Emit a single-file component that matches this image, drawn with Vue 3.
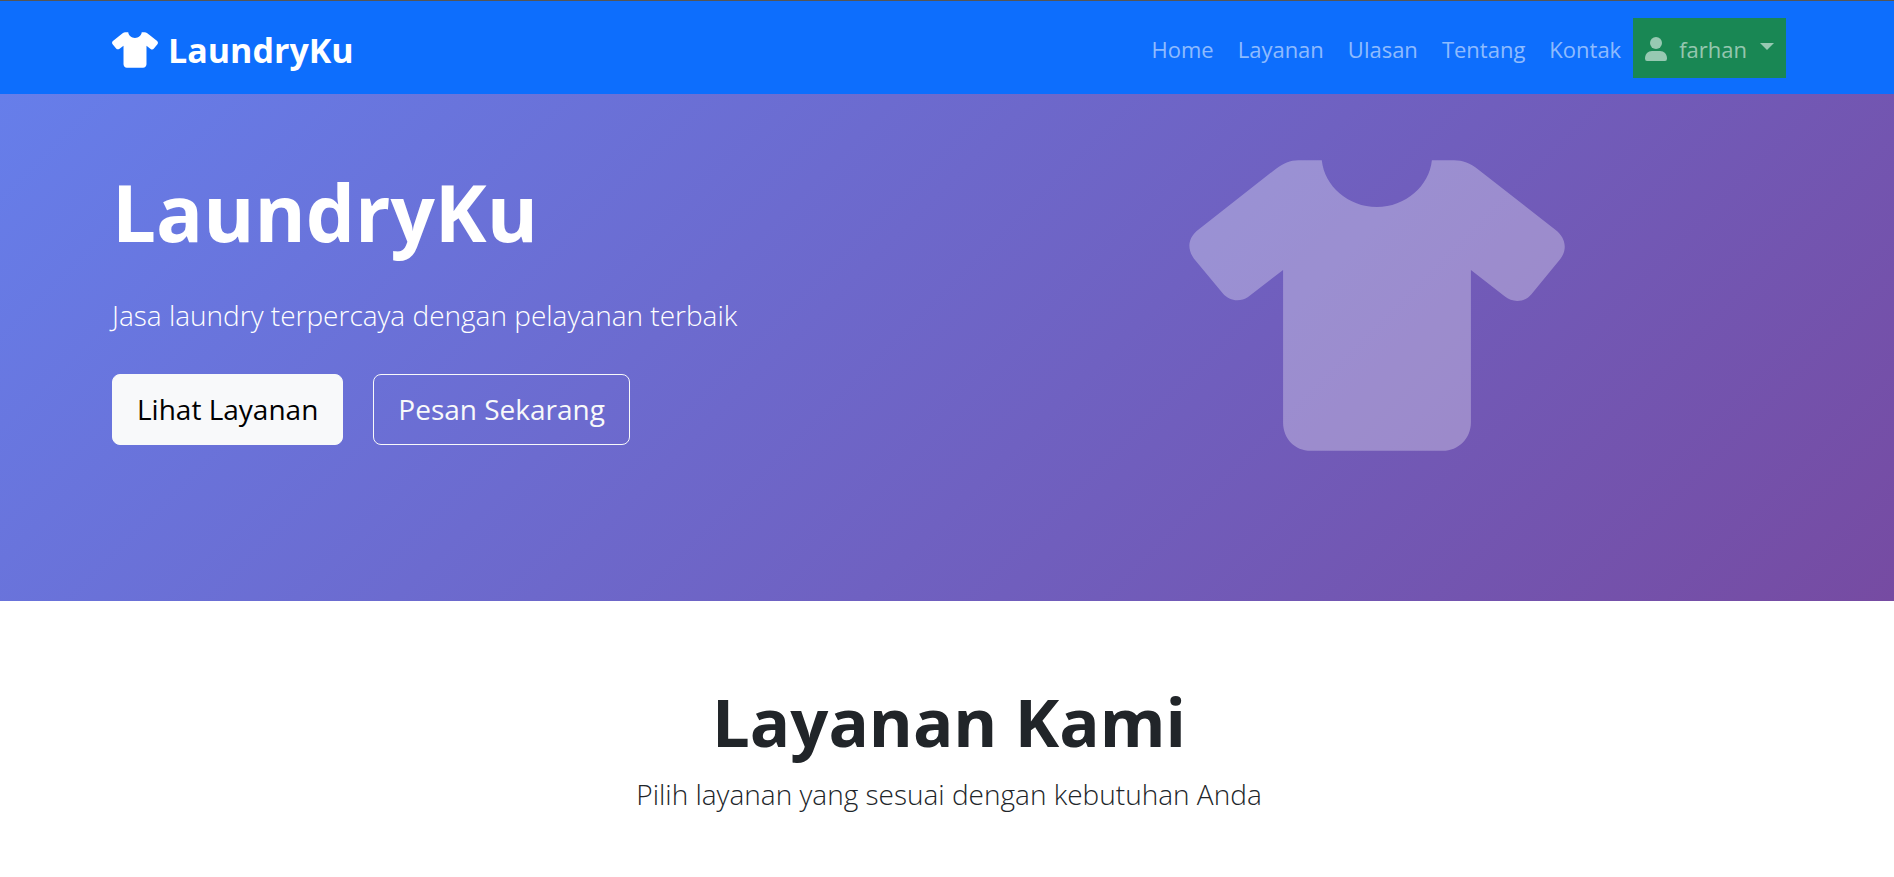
<script setup>
import { ref } from 'vue'

const brand = 'LaundryKu'
const links = ref(['Home', 'Layanan', 'Ulasan', 'Tentang', 'Kontak'])
const shirt =
  'M413 60H483C491 138 562 200 648 200S805 138 813 60H880C904 60 930 69 950 86L1184 269C1214 292 1220 327 1198 356L1112 461C1092 486 1056 489 1031 468L930 389V846C930 894 892 931 846 931H450C402 931 367 894 367 846V389L262 470C238 486 206 483 186 459L100 355C79 327 82 295 108 272L345 86C368 69 388 60 413 60Z'
</script>

<template>
  <div class="page">
    <header class="navbar">
      <a class="brand" href="#">
        <svg class="brand-icon" viewBox="85 60 1127 871" aria-hidden="true"><path :d="shirt" /></svg>
        <span>{{ brand }}</span>
      </a>
      <nav class="nav">
        <a v-for="link in links" :key="link" class="nav-link" href="#">{{ link }}</a>
        <button class="user" type="button">
          <svg class="user-icon" viewBox="0 0 22 24" aria-hidden="true">
            <circle cx="11" cy="6" r="6" />
            <path d="M7 14H15C19 14 22 17 22 21.500Q22 24 20 24H2Q0 24 0 21.500C0 17 3 14 7 14Z" />
          </svg>
          <span>farhan</span>
          <span class="caret"></span>
        </button>
      </nav>
    </header>

    <section class="hero">
      <div class="hero-text">
        <h1>{{ brand }}</h1>
        <p class="lead">Jasa laundry terpercaya dengan pelayanan terbaik</p>
        <div class="actions">
          <a class="btn btn-light" href="#layanan">Lihat Layanan</a>
          <a class="btn btn-outline" href="#pesan">Pesan Sekarang</a>
        </div>
      </div>
      <div class="hero-art">
        <svg class="hero-icon" viewBox="85 60 1127 871" aria-hidden="true"><path :d="shirt" /></svg>
      </div>
    </section>

    <main id="layanan" class="services">
      <h2>Layanan Kami</h2>
      <p class="lead">Pilih layanan yang sesuai dengan kebutuhan Anda</p>
    </main>
  </div>
</template>

<style>
body {
  margin: 0;
  background: #fff;
}
</style>

<style scoped>
.page {
  font-family: 'Open Sans', 'Noto Sans', sans-serif;
  color: #212529;
}
.page * {
  box-sizing: border-box;
}
.navbar {
  display: flex;
  align-items: center;
  justify-content: space-between;
  border-top: 1px solid #555;
  padding: 17px 108px 16px 112px;
  background: #0d6efd;
}
.brand {
  display: flex;
  align-items: center;
  gap: 10px;
  padding-top: 4px;
  color: #fff;
  font-size: 34px;
  font-weight: 700;
  line-height: 54px;
  text-decoration: none;
}
.brand-icon {
  width: 46px;
  height: 36px;
  fill: #fff;
}
.nav {
  display: flex;
  align-items: center;
  font-size: 22px;
  line-height: 36px;
}
.nav-link {
  padding: 13px 12px 11px;
  color: rgba(255, 255, 255, 0.55);
  text-decoration: none;
}
.user {
  display: flex;
  align-items: center;
  border: 0;
  padding: 13px 12px 11px;
  background: #198754;
  color: rgba(255, 255, 255, 0.55);
  font: inherit;
}
.user-icon {
  width: 22px;
  height: 24px;
  margin-right: 12px;
  fill: currentColor;
}
.caret {
  margin: 0 0 6px 13px;
  border: 7px solid transparent;
  border-top-color: currentColor;
  border-bottom: 0;
}
.hero {
  display: grid;
  grid-template-columns: 1fr 1fr;
  gap: 36px;
  padding: 66px 108px 150px 112px;
  background: linear-gradient(135deg, #667eea 0%, #764ba2 100%);
  color: #fff;
}
h1,
h2,
p {
  margin: 0;
}
h1 {
  font-size: 78px;
  font-weight: 700;
  line-height: 104px;
}
.lead {
  font-size: 28px;
  font-weight: 300;
  line-height: 45px;
}
.hero .lead {
  margin: 29px 0 36px;
}
.actions {
  display: flex;
  gap: 30px;
}
.btn {
  border: 1px solid #f8f9fa;
  border-radius: 8px;
  padding: 12px 24px;
  font-size: 28px;
  line-height: 45px;
  text-decoration: none;
}
.btn-light {
  background: #f8f9fa;
  color: #000;
}
.btn-outline {
  color: #f8f9fa;
}
.hero-art {
  display: flex;
  justify-content: center;
}
.hero-icon {
  width: 376px;
  height: 291px;
  fill: #fff;
  opacity: 0.3;
}
.services {
  padding: 75px 108px 48px 112px;
  text-align: center;
}
h2 {
  font-size: 67px;
  font-weight: 700;
  line-height: 90px;
}
.services .lead {
  margin-top: 6px;
}
</style>
